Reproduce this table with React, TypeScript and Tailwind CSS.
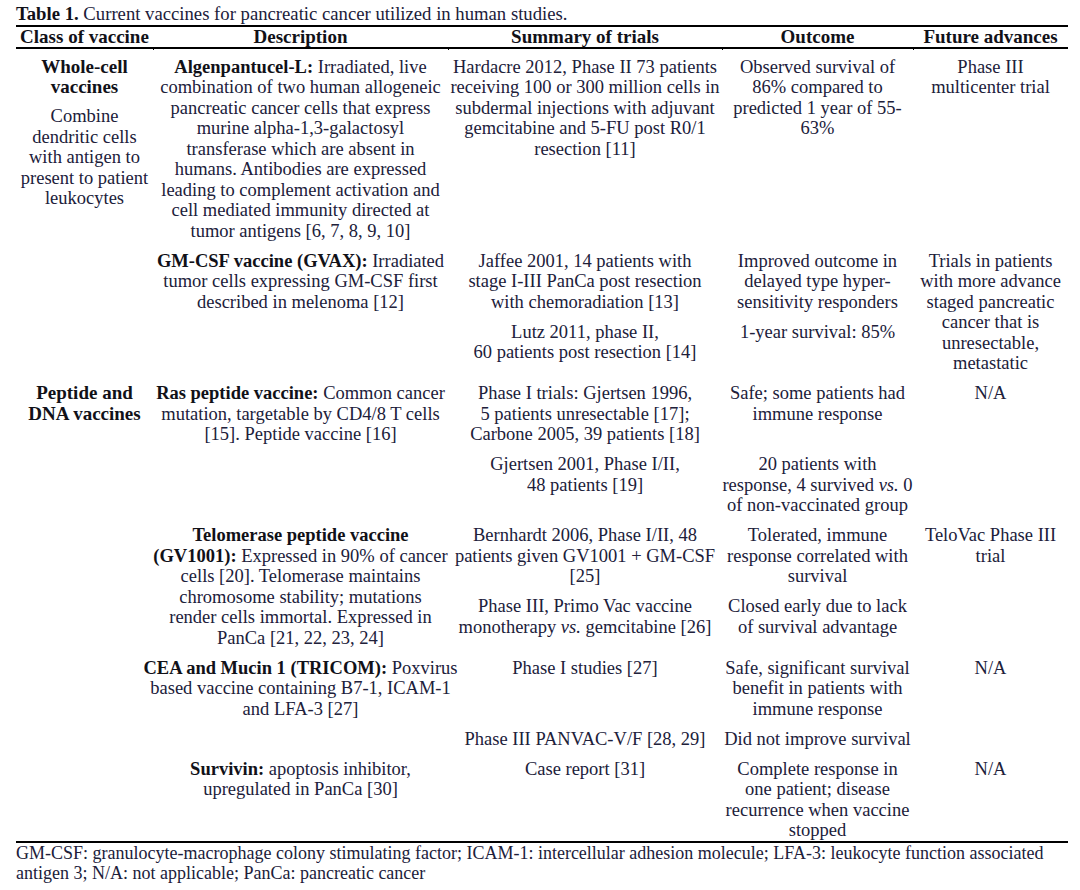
import React from "react";

type L = React.ReactNode;

const B = ({ children }: { children: React.ReactNode }) => (
  <b className="font-bold text-[#111118]">{children}</b>
);

const Cell = ({ lines, w, last }: { lines: L[]; w: string; last?: boolean }) => (
  <div className={`flex flex-col items-center ${w} ${last ? "pt-[4.75px] pb-0" : "py-[4.75px]"}`}>
    {lines.map((l, i) => (
      <div key={i} className="whitespace-nowrap">
        {l}
      </div>
    ))}
  </div>
);

type Pair = [L[], L[]];
type Row = { desc: L[]; pairs: Pair[]; future: L[]; last?: boolean };

const SubRow = ({ r }: { r: Row }) => (
  <div className="flex">
    <Cell lines={r.desc} w="w-[295px]" last={r.last} />
    <div className="flex flex-col w-[465px]">
      {r.pairs.map((p, i) => (
        <div key={i} className="flex">
          <Cell lines={p[0]} w="w-[274px]" last={r.last} />
          <Cell lines={p[1]} w="w-[191px]" last={r.last} />
        </div>
      ))}
    </div>
    <Cell lines={r.future} w="w-[155px]" last={r.last} />
  </div>
);

const group1: Row[] = [
  {
    desc: [
      <><B>Algenpantucel-L:</B> Irradiated, live</>,
      "combination of two human allogeneic",
      "pancreatic cancer cells that express",
      "murine alpha-1,3-galactosyl",
      "transferase which are absent in",
      "humans. Antibodies are expressed",
      "leading to complement activation and",
      "cell mediated immunity directed at",
      "tumor antigens [6, 7, 8, 9, 10]",
    ],
    pairs: [
      [
        [
          "Hardacre 2012, Phase II 73 patients",
          "receiving 100 or 300 million cells in",
          "subdermal injections with adjuvant",
          "gemcitabine and 5-FU post R0/1",
          "resection [11]",
        ],
        ["Observed survival of", "86% compared to", "predicted 1 year of 55-", "63%"],
      ],
    ],
    future: ["Phase III", "multicenter trial"],
  },
  {
    desc: [
      <><B>GM-CSF vaccine (GVAX):</B> Irradiated</>,
      "tumor cells expressing GM-CSF first",
      "described in melenoma [12]",
    ],
    pairs: [
      [
        ["Jaffee 2001, 14 patients with", "stage I-III PanCa post resection", "with chemoradiation [13]"],
        ["Improved outcome in", "delayed type hyper-", "sensitivity responders"],
      ],
      [["Lutz 2011, phase II,", "60 patients post resection [14]"], ["1-year survival: 85%"]],
    ],
    future: [
      "Trials in patients",
      "with more advance",
      "staged pancreatic",
      "cancer that is",
      "unresectable,",
      "metastatic",
    ],
  },
];

const group2: Row[] = [
  {
    desc: [
      <><B>Ras peptide vaccine:</B> Common cancer</>,
      "mutation, targetable by CD4/8 T cells",
      "[15]. Peptide vaccine [16]",
    ],
    pairs: [
      [
        ["Phase I trials: Gjertsen 1996,", "5 patients unresectable [17];", "Carbone 2005, 39 patients [18]"],
        ["Safe; some patients had", "immune response"],
      ],
      [
        ["Gjertsen 2001, Phase I/II,", "48 patients [19]"],
        ["20 patients with", <>response, 4 survived <i>vs.</i> 0</>, "of non-vaccinated group"],
      ],
    ],
    future: ["N/A"],
  },
  {
    desc: [
      <B>Telomerase peptide vaccine</B>,
      <><B>(GV1001):</B> Expressed in 90% of cancer</>,
      "cells [20]. Telomerase maintains",
      "chromosome stability; mutations",
      "render cells immortal. Expressed in",
      "PanCa [21, 22, 23, 24]",
    ],
    pairs: [
      [
        ["Bernhardt 2006, Phase I/II, 48", "patients given GV1001 + GM-CSF", "[25]"],
        ["Tolerated, immune", "response correlated with", "survival"],
      ],
      [
        ["Phase III, Primo Vac vaccine", <>monotherapy <i>vs.</i> gemcitabine [26]</>],
        ["Closed early due to lack", "of survival advantage"],
      ],
    ],
    future: ["TeloVac Phase III", "trial"],
  },
  {
    desc: [
      <><B>CEA and Mucin 1 (TRICOM):</B> Poxvirus</>,
      "based vaccine containing B7-1, ICAM-1",
      "and LFA-3 [27]",
    ],
    pairs: [
      [["Phase I studies [27]"], ["Safe, significant survival", "benefit in patients with", "immune response"]],
      [["Phase III PANVAC-V/F [28, 29]"], ["Did not improve survival"]],
    ],
    future: ["N/A"],
  },
  {
    desc: [<><B>Survivin:</B> apoptosis inhibitor,</>, "upregulated in PanCa [30]"],
    pairs: [
      [["Case report [31]"], ["Complete response in", "one patient; disease", "recurrence when vaccine", "stopped"]],
    ],
    future: ["N/A"],
    last: true,
  },
];

const ticks = [137, 432, 706, 897];

export default function App() {
  return (
    <div className="w-[1080px] h-[890px] bg-white font-['Liberation_Serif',serif] text-[18.5px] leading-[20.5px] text-[#20203a] overflow-hidden">
      <div className="relative ml-[16px] w-[1052px] pt-[4px]">
        <div className="whitespace-nowrap text-[18.7px]">
          <B>Table 1.</B> Current vaccines for pancreatic cancer utilized in human studies.
        </div>
        {/* Header */}
        <div className="border-t-2 border-b-2 border-[#000] grid grid-cols-[137px_295px_274px_191px_155px] font-bold text-[#111118] text-center text-[19px]">
          <div className="whitespace-nowrap">Class of vaccine</div>
          <div>Description</div>
          <div>Summary of trials</div>
          <div>Outcome</div>
          <div>Future advances</div>
        </div>
        {/* Body */}
        <div className="pt-[3px] border-b-2 border-[#000]">
          <div className="flex">
            <div className="w-[137px] flex flex-col items-center py-[4.75px]">
              <div className="font-bold text-[#111118] text-[19px]">Whole-cell</div>
              <div className="font-bold text-[#111118] text-[19px]">vaccines</div>
              <div className="mt-[8.5px]">Combine</div>
              <div>dendritic cells</div>
              <div>with antigen to</div>
              <div className="whitespace-nowrap">present to patient</div>
              <div>leukocytes</div>
            </div>
            <div className="flex flex-col">
              {group1.map((r, i) => (
                <SubRow key={i} r={r} />
              ))}
            </div>
          </div>
          <div className="flex">
            <div className="w-[137px] flex flex-col items-center py-[4.75px]">
              <div className="font-bold text-[#111118] whitespace-nowrap text-[19px]">Peptide and</div>
              <div className="font-bold text-[#111118] whitespace-nowrap text-[19px]">DNA vaccines</div>
            </div>
            <div className="flex flex-col">
              {group2.map((r, i) => (
                <SubRow key={i} r={r} />
              ))}
            </div>
          </div>
        </div>
        {/* Footer */}
        <div className="text-[18px]">
          <div className="whitespace-nowrap">
            GM-CSF: granulocyte-macrophage colony stimulating factor; ICAM-1: intercellular adhesion molecule; LFA-3: leukocyte function associated
          </div>
          <div className="whitespace-nowrap">antigen 3; N/A: not applicable; PanCa: pancreatic cancer</div>
        </div>

        {ticks.map((x) => (
          <React.Fragment key={x}>
            <span className="absolute top-[26px] w-px h-[1px] bg-black" style={{ left: x }} />
            <span className="absolute top-[49px] w-px h-[1px] bg-black" style={{ left: x }} />
          </React.Fragment>
        ))}
      </div>
    </div>
  );
}
